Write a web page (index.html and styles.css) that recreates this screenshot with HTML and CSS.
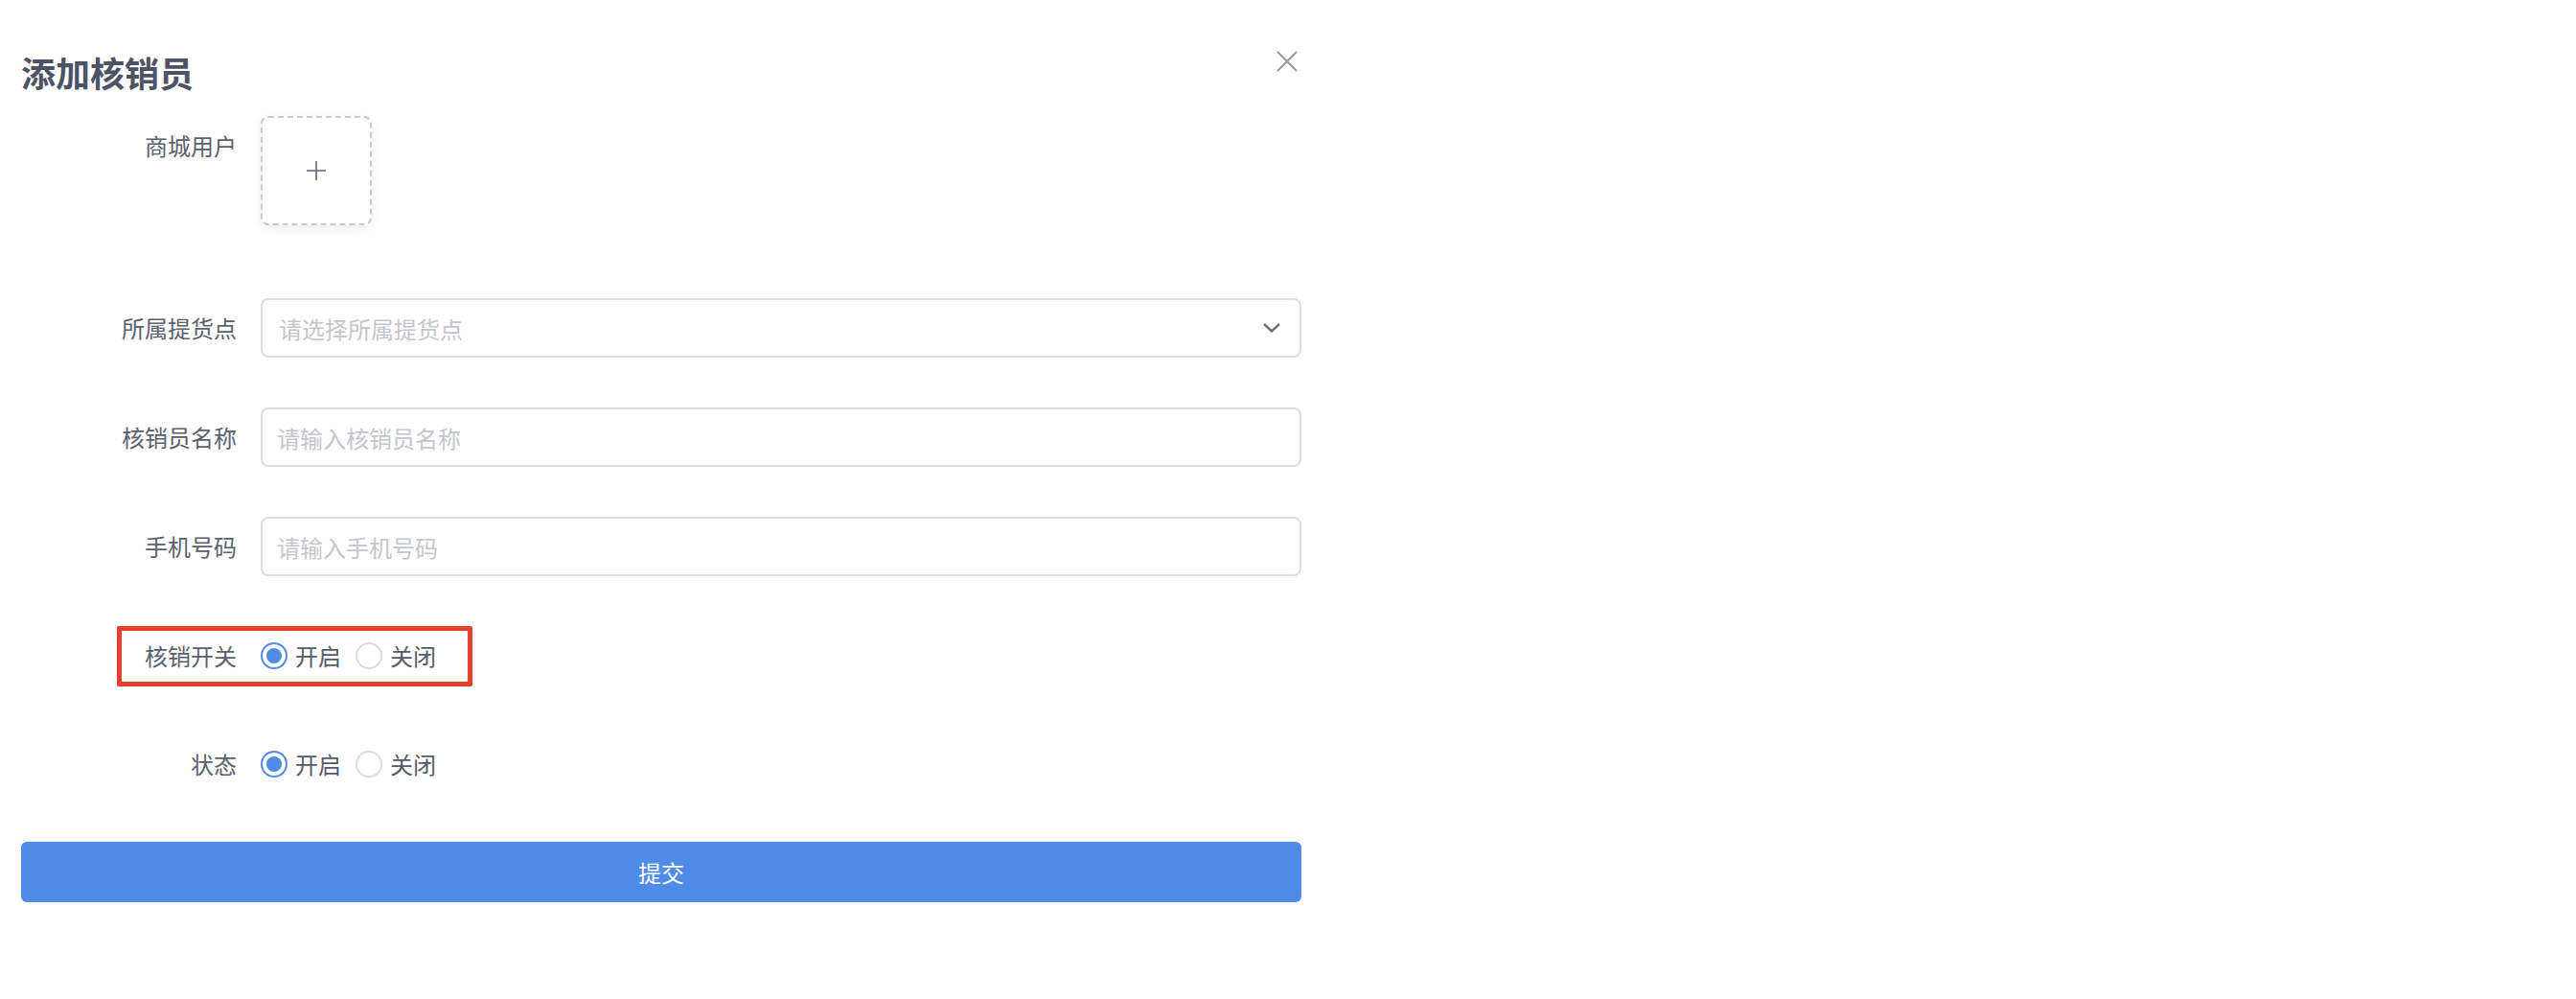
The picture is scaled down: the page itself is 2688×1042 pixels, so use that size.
FILE: index.html
```html
<!DOCTYPE html>
<html lang="zh-CN">
<head>
    <meta charset="UTF-8">
    <title>添加核销员</title>
    <link rel="stylesheet" href="styles.css">
</head>
<body>

    <div class="dialog">
        <!-- Header -->
        <div class="dialog-header">
            <h1 class="dialog-title">添加核销员</h1>
            <span class="close-btn">
                <svg width="22" height="22" viewBox="0 0 22 22"><path d="M1 1L21 21M21 1L1 21" stroke="#9a9a9a" stroke-width="2" fill="none"/></svg>
            </span>
        </div>

        <!-- Form -->
        <form class="form">
            <div class="form-item item-upload">
                <label class="form-label">商城用户</label>
                <div class="form-content">
                    <div class="upload-box">
                        <svg width="20" height="20" viewBox="0 0 20 20"><path d="M10 0V20M0 10H20" stroke="#5f6677" stroke-width="1.6" fill="none"/></svg>
                    </div>
                </div>
            </div>

            <div class="form-item">
                <label class="form-label">所属提货点</label>
                <div class="form-content">
                    <div class="select-box">
                        <span class="placeholder">请选择所属提货点</span>
                        <svg class="chevron" width="18" height="10" viewBox="0 0 18 10"><path d="M1 1L9 8.5L17 1" stroke="#6b7080" stroke-width="2.4" fill="none"/></svg>
                    </div>
                </div>
            </div>

            <div class="form-item">
                <label class="form-label">核销员名称</label>
                <div class="form-content">
                    <input class="text-input" type="text" placeholder="请输入核销员名称">
                </div>
            </div>

            <div class="form-item">
                <label class="form-label">手机号码</label>
                <div class="form-content">
                    <input class="text-input" type="text" placeholder="请输入手机号码">
                </div>
            </div>

            <div class="form-item item-marked">
                <label class="form-label">核销开关</label>
                <div class="form-content radios">
                    <span class="radio checked"></span><span class="radio-text">开启</span>
                    <span class="radio"></span><span class="radio-text">关闭</span>
                </div>
                <div class="mark-box"></div>
            </div>

            <div class="form-item">
                <label class="form-label">状态</label>
                <div class="form-content radios">
                    <span class="radio checked"></span><span class="radio-text">开启</span>
                    <span class="radio"></span><span class="radio-text">关闭</span>
                </div>
            </div>

            <button type="button" class="submit-btn">提交</button>
        </form>
    </div>

</body>
</html>
```

FILE: styles.css
```css
body {
    margin: 0;
    background: #fff;
    font-family: "Noto Sans CJK SC", "Noto Sans", sans-serif;
    color: #5b6070;
}
.dialog {
    width: 1336px;
    padding: 50px 22px 0;
}
.dialog-header {
    display: flex;
    justify-content: space-between;
    align-items: flex-start;
    height: 50px;
}
.dialog-title {
    margin: 0;
    font-size: 36px;
    line-height: 50px;
    font-weight: 700;
    color: #4d5364;
}
.close-btn {
    display: block;
    width: 22px;
    height: 22px;
    margin-top: 3px;
    margin-right: 4px;
}
.close-btn svg {
    display: block;
}
.form {
    margin-top: 21px;
}
.form-item {
    display: flex;
    align-items: flex-start;
    margin-bottom: 52px;
    position: relative;
}
.item-upload {
    margin-bottom: 76px;
}
.form-label {
    width: 250px;
    flex-shrink: 0;
    box-sizing: border-box;
    padding-right: 25px;
    text-align: right;
    font-size: 24px;
    line-height: 61px;
    color: #5b6070;
}
.form-content {
    flex: 1;
}
.upload-box {
    width: 116px;
    height: 114px;
    box-sizing: border-box;
    border: 2px dashed #c3cbd8;
    border-radius: 8px;
    display: flex;
    align-items: center;
    justify-content: center;
    box-shadow: 0 3px 8px rgba(0, 0, 0, 0.08);
}
.select-box, .text-input {
    display: flex;
    align-items: center;
    width: 100%;
    height: 62px;
    box-sizing: border-box;
    border: 2px solid #dcdde3;
    border-radius: 8px;
    padding: 0 20px 0 17px;
    font-family: inherit;
    font-size: 24px;
    color: #5b6070;
    background: #fff;
    outline: none;
}
.text-input {
    padding-left: 15px;
}
.placeholder {
    flex: 1;
    color: #c4c6cc;
}
.text-input::placeholder {
    color: #c4c6cc;
}
.chevron {
    display: block;
}
.radios {
    display: flex;
    align-items: center;
    height: 61px;
}
.radio {
    width: 28px;
    height: 28px;
    box-sizing: border-box;
    border: 2px solid #dadce2;
    border-radius: 50%;
    position: relative;
}
.radio.checked {
    border-color: #4f8de8;
}
.radio.checked::after {
    content: "";
    position: absolute;
    left: 4px;
    top: 4px;
    width: 16px;
    height: 16px;
    border-radius: 50%;
    background: #4f8de8;
}
.radio-text {
    font-size: 24px;
    margin: 0 15px 0 8px;
    color: #555a69;
}
.item-marked {
    margin-bottom: 52px;
}
.mark-box {
    position: absolute;
    left: 100px;
    top: 0;
    width: 371px;
    height: 63px;
    box-sizing: border-box;
    border: 5px solid #e5402b;
    border-radius: 2px;
}
.submit-btn {
    display: block;
    width: 100%;
    height: 63px;
    margin-top: -1px;
    border: none;
    border-radius: 6px;
    background-color: #4f8ce8;
    color: #fff;
    font-family: inherit;
    font-size: 24px;
    cursor: pointer;
}
```
